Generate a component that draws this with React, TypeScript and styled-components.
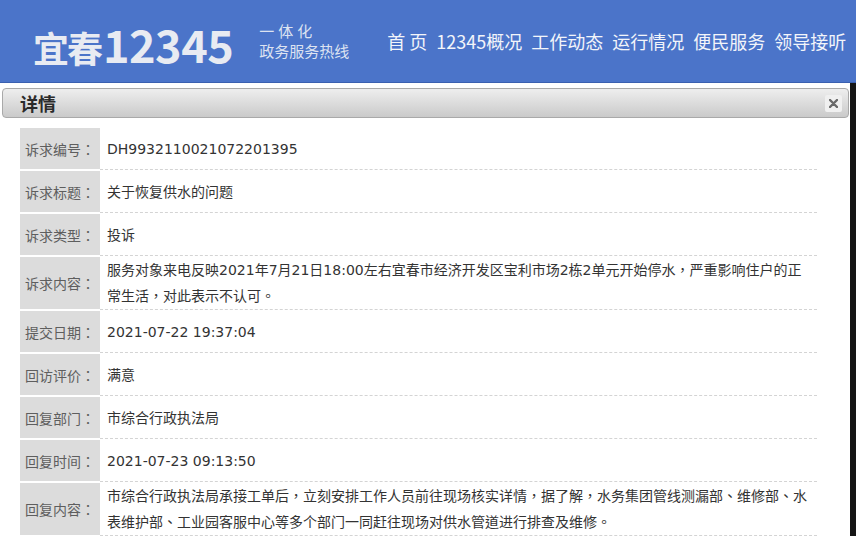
import React from "react";
import styled, { createGlobalStyle } from "styled-components";

const GlobalStyle = createGlobalStyle`
  html, body { margin: 0; padding: 0; background: #ffffff; }
  body { font-family: "DejaVu Sans", "Noto Sans CJK TC", sans-serif; }
  * { box-sizing: border-box; }
`;

const Page = styled.div`
  width: 856px;
  height: 536px;
  overflow: hidden;
  display: flex;
  flex-direction: column;
`;

const Header = styled.header`
  height: 83px;
  flex: none;
  background: #4b74c9;
  border-bottom: 1px solid #3a60b0;
  display: flex;
  align-items: center;
  padding-left: 33px;
`;

const Logo = styled.div`
  display: flex;
  align-items: baseline;
  color: #e8ebf2;
  font-family: "Noto Sans CJK SC", sans-serif;
  font-weight: 700;
  margin-top: 4px;
`;

const LogoHan = styled.span`
  font-size: 36px;
  letter-spacing: -2px;
`;

const LogoNum = styled.span`
  font-size: 45px;
  letter-spacing: -0.5px;
  margin-left: 2px;
`;

const Tagline = styled.div`
  margin-left: 26px;
  display: flex;
  flex-direction: column;
  color: #dde3f1;
  font-family: "Noto Sans CJK SC", sans-serif;
  font-size: 15px;
  line-height: 20px;
`;

const TagTop = styled.span`
  letter-spacing: 4px;
`;

const Nav = styled.nav`
  margin-left: 38px;
  display: flex;
  gap: 9px;
  color: #f3f5fa;
  font-family: "Noto Sans CJK SC", sans-serif;
  font-size: 18px;
  white-space: nowrap;
`;

const NavItem = styled.span``;

const Main = styled.main`
  flex: 1;
  border-right: 6px solid #151515;
  background: #ffffff;
  padding: 5px 1px 0 2px;
  display: flex;
  flex-direction: column;
`;

const TitleBar = styled.div`
  height: 30px;
  border: 1px solid #a9a9a9;
  border-radius: 4px;
  background: linear-gradient(#eeeeee, #cacaca);
  display: flex;
  align-items: center;
  justify-content: space-between;
  padding: 0 6px 0 17px;
`;

const Title = styled.h2`
  margin: 0;
  font-family: "Noto Sans CJK SC", sans-serif;
  font-size: 18px;
  font-weight: 700;
  color: #2b2b2b;
`;

const CloseButton = styled.button`
  width: 17px;
  height: 17px;
  padding: 0;
  border: none;
  border-radius: 2px;
  background: #f0f0f0;
  display: flex;
  align-items: center;
  justify-content: center;
  cursor: pointer;
`;

const Table = styled.div`
  margin: 10px 32px 0 18px;
  display: flex;
  flex-direction: column;
`;

const Row = styled.div`
  display: grid;
  grid-template-columns: 80px 1fr;
`;

const Label = styled.div`
  background: #dcdcdc;
  background-clip: padding-box;
  border-bottom: 2px solid #ffffff;
  min-height: 43px;
  display: flex;
  align-items: center;
  padding-left: 5px;
  font-family: "Noto Sans CJK TC", sans-serif;
  font-size: 14px;
  color: #5e5e5e;
  white-space: nowrap;
`;

const Value = styled.div`
  border-bottom: 1px dashed #d4d4d4;
  margin-bottom: 1px;
  min-height: 41px;
  display: flex;
  align-items: center;
  padding: 0 6px 0 7px;
  font-size: 14px;
  line-height: 26px;
  color: #333333;
`;

const rows: { label: string; value: string }[] = [
  { label: "诉求编号：", value: "DH9932110021072201395" },
  { label: "诉求标题：", value: "关于恢复供水的问题" },
  { label: "诉求类型：", value: "投诉" },
  {
    label: "诉求内容：",
    value:
      "服务对象来电反映2021年7月21日18:00左右宜春市经济开发区宝利市场2栋2单元开始停水，严重影响住户的正常生活，对此表示不认可。",
  },
  { label: "提交日期：", value: "2021-07-22 19:37:04" },
  { label: "回访评价：", value: "满意" },
  { label: "回复部门：", value: "市综合行政执法局" },
  { label: "回复时间：", value: "2021-07-23 09:13:50" },
  {
    label: "回复内容：",
    value:
      "市综合行政执法局承接工单后，立刻安排工作人员前往现场核实详情，据了解，水务集团管线测漏部、维修部、水表维护部、工业园客服中心等多个部门一同赶往现场对供水管道进行排查及维修。",
  },
];

const navItems = ["首 页", "12345概况", "工作动态", "运行情况", "便民服务", "领导接听"];

export default function App() {
  return (
    <Page>
      <GlobalStyle />
      <Header>
        <Logo>
          <LogoHan>宜春</LogoHan>
          <LogoNum>12345</LogoNum>
        </Logo>
        <Tagline>
          <TagTop>一体化</TagTop>
          <span>政务服务热线</span>
        </Tagline>
        <Nav>
          {navItems.map((n) => (
            <NavItem key={n}>{n}</NavItem>
          ))}
        </Nav>
      </Header>
      <Main>
        <TitleBar>
          <Title>详情</Title>
          <CloseButton aria-label="close">
            <svg width="9" height="9" viewBox="0 0 9 9">
              <path d="M1 1 L8 8 M8 1 L1 8" stroke="#6a6a6a" strokeWidth="2.4" strokeLinecap="round" />
            </svg>
          </CloseButton>
        </TitleBar>
        <Table>
          {rows.map((r) => (
            <Row key={r.label}>
              <Label>{r.label}</Label>
              <Value>{r.value}</Value>
            </Row>
          ))}
        </Table>
      </Main>
    </Page>
  );
}
